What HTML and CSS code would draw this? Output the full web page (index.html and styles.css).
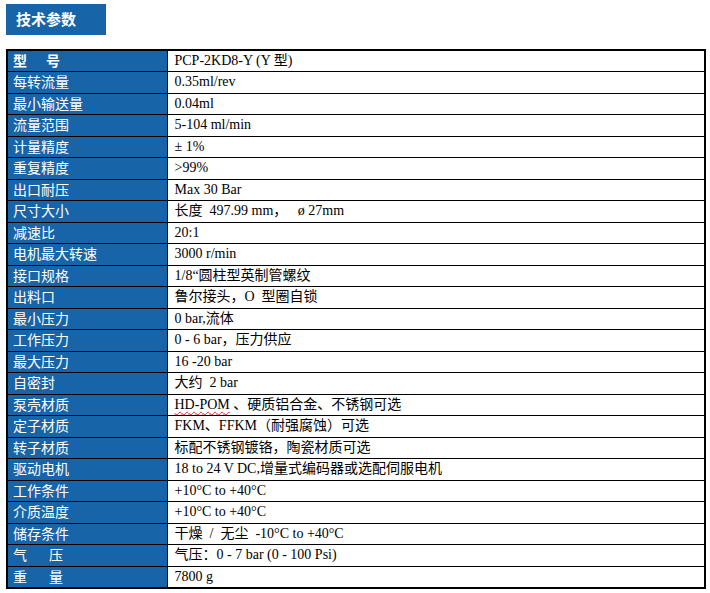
FILE: index.html
```html
<!DOCTYPE html>
<html lang="zh">
<head>
<meta charset="utf-8">
<title>技术参数</title>
<link rel="stylesheet" href="styles.css">
</head>
<body>
<div class="page">
  <div class="title">技术参数</div>
  <table class="spec">
    <colgroup><col class="c1"><col class="c2"></colgroup>
    <tbody>
      <tr><th class="bold">型&nbsp;&nbsp;&nbsp;&nbsp;&nbsp;&nbsp;号</th><td>PCP-2KD8-Y (Y 型)</td></tr>
      <tr><th>每转流量</th><td>0.35ml/rev</td></tr>
      <tr><th>最小输送量</th><td>0.04ml</td></tr>
      <tr><th>流量范围</th><td>5-104 ml/min</td></tr>
      <tr><th>计量精度</th><td>± 1%</td></tr>
      <tr><th>重复精度</th><td>&gt;99%</td></tr>
      <tr><th>出口耐压</th><td>Max 30 Bar</td></tr>
      <tr><th>尺寸大小</th><td>长度&nbsp; 497.99 mm，&nbsp;&nbsp; ø 27mm</td></tr>
      <tr><th>减速比</th><td>20:1</td></tr>
      <tr><th>电机最大转速</th><td>3000 r/min</td></tr>
      <tr><th>接口规格</th><td>1/8“圆柱型英制管螺纹</td></tr>
      <tr><th>出料口</th><td>鲁尔接头，O&nbsp; 型圈自锁</td></tr>
      <tr><th>最小压力</th><td>0 bar,流体</td></tr>
      <tr><th>工作压力</th><td>0 - 6 bar，压力供应</td></tr>
      <tr><th>最大压力</th><td>16 -20 bar</td></tr>
      <tr><th>自密封</th><td>大约&nbsp; 2 bar</td></tr>
      <tr><th>泵壳材质</th><td><span class="squiggle">HD-POM</span> 、硬质铝合金、不锈钢可选</td></tr>
      <tr><th>定子材质</th><td>FKM、FFKM（耐强腐蚀）可选</td></tr>
      <tr><th>转子材质</th><td>标配不锈钢镀铬，陶瓷材质可选</td></tr>
      <tr><th>驱动电机</th><td>18 to 24 V DC,增量式编码器或选配伺服电机</td></tr>
      <tr><th>工作条件</th><td>+10°C to +40°C</td></tr>
      <tr><th>介质温度</th><td>+10°C to +40°C</td></tr>
      <tr><th>储存条件</th><td>干燥&nbsp; /&nbsp; 无尘&nbsp; -10°C to +40°C</td></tr>
      <tr><th>气&nbsp;&nbsp;&nbsp;&nbsp;&nbsp;&nbsp;&nbsp;压</th><td>气压：0 - 7 bar (0 - 100 Psi)</td></tr>
      <tr><th>重&nbsp;&nbsp;&nbsp;&nbsp;&nbsp;&nbsp;&nbsp;量</th><td>7800 g</td></tr>
    </tbody>
  </table>
</div>
</body>
</html>
```

FILE: styles.css
```css
html, body {
  margin: 0;
  padding: 0;
  background: #ffffff;
}

.page {
  padding: 4px 0 0 6px;
}

.title {
  width: 100px;
  height: 31px;
  box-sizing: border-box;
  background: #1765a8;
  color: #ffffff;
  font-family: "Noto Sans CJK SC", "Noto Sans", sans-serif;
  font-weight: bold;
  font-size: 15px;
  line-height: 29px;
  padding-left: 10px;
  margin-bottom: 14px;
}

.spec {
  width: 700px;
  border-collapse: collapse;
  table-layout: fixed;
  border: 2px solid #000000;
}

.c1 { width: 160px; }

.spec tr {
  height: 21.5px;
}

.spec th,
.spec td {
  border: 1px solid #000000;
  padding: 0;
  font-size: 14px;
  line-height: 18px;
  vertical-align: middle;
  text-align: left;
  white-space: nowrap;
}

.spec th {
  background: #1765a8;
  color: #ffffff;
  font-weight: normal;
  font-family: "Noto Sans CJK SC", sans-serif;
  padding: 0 0 2px 5px;
}

.spec th.bold {
  font-weight: bold;
}

.spec td {
  color: #000000;
  font-family: "Liberation Serif", "Noto Sans CJK SC", serif;
  padding-left: 7px;
}

.squiggle {
  text-decoration: underline wavy #e02020;
  text-decoration-thickness: 1px;
  text-underline-offset: 2px;
}
```
